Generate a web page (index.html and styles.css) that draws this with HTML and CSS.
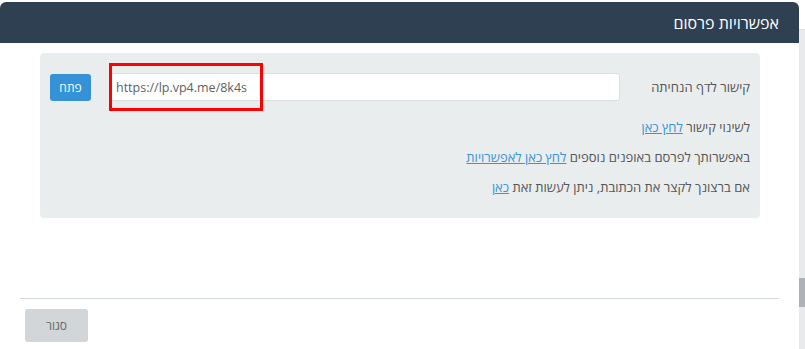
FILE: index.html
```html
<!DOCTYPE html>
<html lang="he" dir="rtl">
<head>
<meta charset="utf-8">
<link rel="stylesheet" href="styles.css">
</head>
<body>
<div class="page">
  <div class="scrollbar"><div class="track"><div class="thumb"></div></div></div>
  <div class="modal">
    <div class="modal-header"><h4 class="modal-title">אפשרויות פרסום</h4></div>
    <div class="modal-body">
      <div class="panel">
        <div class="link-row">
          <label class="link-label">קישור לדף הנחיתה</label>
          <div class="input-wrap">
            <input class="url-input" type="text" dir="ltr" value="https://lp.vp4.me/8k4s" readonly>
            <div class="highlight"></div>
          </div>
          <button class="btn-open">פתח</button>
        </div>
        <p class="line">לשינוי קישור <a href="#">לחץ כאן</a></p>
        <p class="line">באפשרותך לפרסם באופנים נוספים <a href="#">לחץ כאן לאפשרויות</a></p>
        <p class="line">אם ברצונך לקצר את הכתובת, ניתן לעשות זאת <a href="#">כאן</a></p>
      </div>
    </div>
    <div class="modal-footer">
      <button class="btn-close">סגור</button>
    </div>
  </div>
</div>
</body>
</html>
```
FILE: styles.css
```css
* { box-sizing: border-box; }
html, body { margin: 0; padding: 0; }
body {
  background: #ffffff;
  font-family: "Open Sans", "Liberation Sans", "DejaVu Sans", sans-serif;
  width: 805px;
  height: 349px;
  overflow: hidden;
}
.page {
  display: flex;
  flex-direction: row;
  height: 349px;
  padding-top: 2px;
}
.scrollbar {
  width: 6px;
  margin-top: -2px;
  padding-top: 29px;
  display: flex;
  flex-direction: column;
}
.track {
  flex: 1;
  background: #e9eaeb;
  border-top: 1px solid #dfe1e2;
  padding-top: 248px;
}
.thumb {
  height: 29px;
  background: #aeb2b6;
}
.modal {
  width: 799px;
  background: #ffffff;
  display: flex;
  flex-direction: column;
}
.modal-header {
  background: #2f4053;
  height: 41px;
  border-radius: 6px 6px 0 0;
  padding: 0 20px;
  display: flex;
  align-items: center;
}
.modal-title {
  margin: 0;
  color: #ffffff;
  font-size: 16px;
  font-weight: 400;
  line-height: 20px;
}
.modal-body {
  padding: 10px 39px 0 40px;
  height: 255px;
}
.panel {
  background: #e9edee;
  border-radius: 4px;
  padding: 20px 10px 14px 10px;
  height: 165px;
}
.link-row {
  display: flex;
  align-items: center;
  height: 28px;
  margin-bottom: 11px;
}
.link-label {
  width: 130px;
  font-size: 13px;
  color: #555;
}
.input-wrap {
  position: relative;
  width: 511px;
  margin-left: 18px;
}
.url-input {
  display: block;
  width: 100%;
  height: 28px;
  border: 1px solid #dcdfe1;
  border-radius: 3px;
  background: #fff;
  font-family: "Open Sans", "Liberation Sans", sans-serif;
  font-size: 12.5px;
  color: #5f5f5f;
  padding: 0 6px;
  text-align: left;
}
.highlight {
  position: absolute;
  left: 0;
  top: -10px;
  width: 154px;
  height: 48px;
  border: 3px solid #ff0000;
}
.btn-open {
  width: 41px;
  height: 27px;
  background: #3592d7;
  color: #fff;
  border: none;
  border-radius: 3px;
  font-family: "Open Sans", "Liberation Sans", sans-serif;
  font-size: 12px;
  padding: 0;
}
.line {
  margin: 0;
  font-size: 13px;
  color: #555;
  line-height: 18px;
  padding: 6px 0;
}
.line a {
  color: #3a94d8;
  text-decoration: underline;
}
.modal-footer {
  margin: 0 20px;
  border-top: 1px solid #d3dade;
  padding: 10px 0 0 0;
  display: flex;
  justify-content: flex-end;
}
.btn-close {
  margin-left: 5px;
  width: 63px;
  height: 33px;
  background: #d2d6d8;
  color: #666;
  border: none;
  border-radius: 3px;
  font-family: "Open Sans", "Liberation Sans", sans-serif;
  font-size: 12px;
}
```
